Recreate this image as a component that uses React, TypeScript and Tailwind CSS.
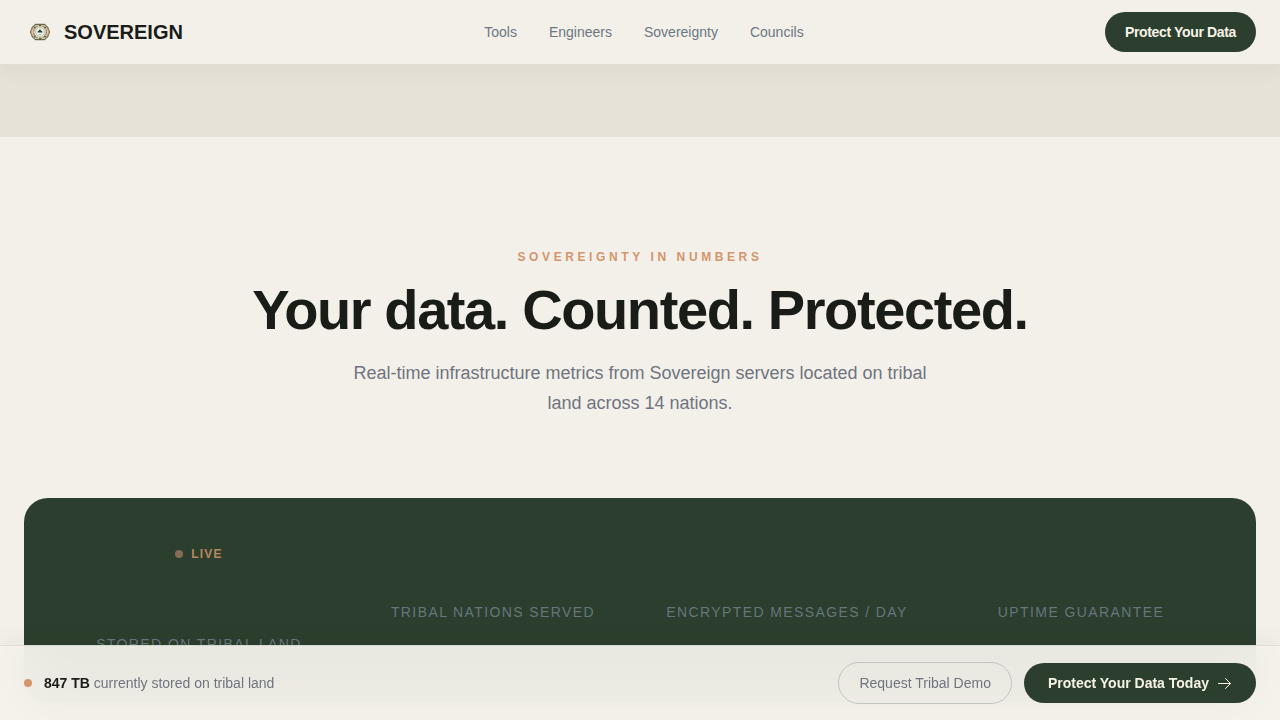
const navLinks = [
  { label: "Tools", href: "#tools" },
  { label: "Engineers", href: "#engineers" },
  { label: "Sovereignty", href: "#sovereignty" },
  { label: "Councils", href: "#councils" },
];

const metrics = [
  { label: "Stored on tribal land", live: true },
  { label: "Tribal nations served", live: false },
  { label: "Encrypted messages / day", live: false },
  { label: "Uptime guarantee", live: false },
];

const Logo = () => (
  <svg viewBox="0 0 32 32" className="size-8" fill="none" aria-hidden="true">
    <path d="M11.5 8.4h9l3.2 3 1.8 4.6-1.8 4.6-3.2 3h-9l-3.2-3L6.500 16l1.800-4.600Z" fill="#d8cbb4" stroke="#65694f" strokeWidth="1.2" strokeLinejoin="round" />
    <circle cx="11.800" cy="16" r="4.800" stroke="#c58f78" strokeWidth="1" />
    <circle cx="20.200" cy="16" r="4.800" stroke="#c58f78" strokeWidth="1" />
    <circle cx="16" cy="16" r="6.400" fill="#ebe3d0" stroke="#9a8262" strokeWidth="1.2" strokeDasharray="3 1" />
    <path d="M16 8.500v2M16 21.500v2M10.200 11.200l1.400 1.200M21.800 11.200l-1.400 1.200M10.200 20.800l1.400-1.200M21.800 20.800l-1.400-1.200" stroke="#4f5f48" strokeWidth="1.2" />
    <circle cx="16" cy="16" r="4.400" fill="#eff3e8" stroke="#a9bb9f" strokeWidth="0.8" />
    <path d="M13.500 16.600c0-1.200.8-1.600 1.300-1.600.1-1 .6-1.500 1.200-1.500s1.100.5 1.200 1.500c.5 0 1.300.4 1.300 1.600Z" fill="#2c3e2d" />
    <path d="M14.600 18.400h2.800" stroke="#a5b3a0" strokeWidth="0.8" />
  </svg>
);

const ArrowRight = () => (
  <svg viewBox="0 0 16 16" className="size-4" fill="none" stroke="currentColor" strokeLinecap="round" strokeLinejoin="round" aria-hidden="true">
    <path d="M2.500 8.500h12M9.500 3.500l5 5-5 5" />
  </svg>
);

const Header = () => (
  <header className="sticky top-0 z-20 flex items-center justify-between border-b border-[#e2ded6] bg-[#f3f0ea] px-6 py-3 shadow-[0_4px_20px_rgba(44,62,45,0.06)]">
    <a href="#top" className="flex items-center gap-2 text-xl leading-8 font-bold">
      <Logo />
      SOVEREIGN
    </a>
    <nav className="flex gap-8 text-sm text-[#6b7780]">
      {navLinks.map((link) => (
        <a key={link.href} href={link.href}>
          {link.label}
        </a>
      ))}
    </nav>
    <button className="h-10 rounded-full bg-[#2c3e2d] px-5 text-sm font-bold tracking-tight text-[#f5f3e8]">
      Protect Your Data
    </button>
  </header>
);

const Metrics = () => (
  <section className="px-6 pt-28 pb-24">
    <div className="mb-20 text-center">
      <p className="mb-[13px] text-xs leading-4 font-bold tracking-[0.3em] text-[#d4956a] uppercase">
        Sovereignty in numbers
      </p>
      <h2 className="mb-4 text-[56px] leading-[64px] font-bold tracking-tight">
        Your data. Counted. Protected.
      </h2>
      <p className="mx-auto max-w-[600px] text-lg leading-[30px] text-[#6f7480]">
        Real-time infrastructure metrics from Sovereign servers located on tribal land across 14 nations.
      </p>
    </div>

    <div className="grid grid-cols-4 gap-10 rounded-3xl bg-[#2c3e2d] p-12 text-center">
      {metrics.map((metric) => (
        <div key={metric.label}>
          {metric.live && (
            <div className="mb-4 flex items-center justify-center gap-2 text-xs leading-4 font-bold tracking-widest text-[#b5895e]">
              <span className="size-2 rounded-full bg-[#876c54]" />
              LIVE
            </div>
          )}
          <div className="mb-2 h-12" />
          <div className="text-sm tracking-widest whitespace-nowrap text-[#65767d] uppercase">{metric.label}</div>
        </div>
      ))}
    </div>
  </section>
);

const StickyBar = () => (
  <div className="fixed inset-x-0 bottom-0 z-20 flex items-center justify-between border-t border-[#2c3e2d]/10 bg-[#f4f2eb]/95 px-6 py-4 shadow-[0_-4px_20px_rgba(44,62,45,0.06)] backdrop-blur-xl">
    <div className="flex items-center gap-3 text-sm text-[#6f7480]">
      <span className="size-2 rounded-full bg-[#d4956a]" />
      <p>
        <strong className="font-bold text-[#1a1c18]">847 TB</strong> currently stored on tribal land
      </p>
    </div>
    <div className="flex items-center gap-3">
      <button className="rounded-full border border-[#c3c5bf] px-5 py-2.5 text-sm text-[#6f7480]">
        Request Tribal Demo
      </button>
      <button className="flex h-10 items-center gap-[7px] rounded-full bg-[#2c3e2d] px-6 text-sm font-bold text-[#f5f3e8]">
        Protect Your Data Today
        <ArrowRight />
      </button>
    </div>
  </div>
);

export default function App() {
  return (
    <div className="min-h-screen bg-[#f3f0ea] font-['Liberation_Sans',Arial,sans-serif] text-[#1a1c18]">
      <Header />
      <main>
        <div className="h-18 bg-[#e7e2d8]" />
        <Metrics />
      </main>
      <StickyBar />
    </div>
  );
}
